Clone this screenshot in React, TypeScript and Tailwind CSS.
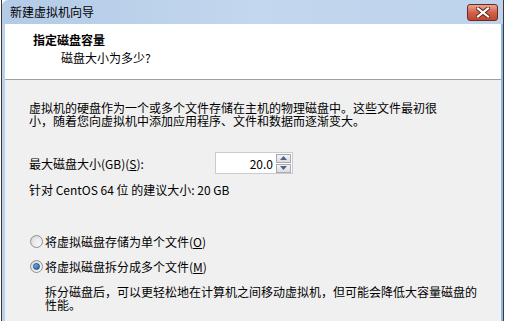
import React from 'react';

const font = { fontFamily: '"Noto Sans CJK SC", "Noto Sans", sans-serif' };

function CloseButton() {
  return (
    <div className="absolute right-[5px] top-[4px] flex h-[17px] w-[31px] items-center justify-center rounded-[3px] border border-[#6b2a20] bg-gradient-to-b from-[#e8a493] via-[#d3624a] to-[#c0452d]">
      <svg width="14" height="11" viewBox="0 0 14 11">
        <path d="M2 1.5 L12 9.5 M12 1.5 L2 9.5" stroke="#5a2018" strokeWidth="4" strokeLinecap="square" />
        <path d="M2 1.5 L12 9.5 M12 1.5 L2 9.5" stroke="#ffffff" strokeWidth="2.2" strokeLinecap="square" />
      </svg>
    </div>
  );
}

function SpinBox() {
  return (
    <div className="flex h-[22px] w-[78px] items-center border border-[#c7ccd4] bg-white">
      <div className="flex-1 pr-[3px] text-right text-[12px] leading-[13px] text-black">20.0</div>
      <div className="flex flex-col gap-[1px] pr-[1px]">
        <div className="flex h-[9px] w-[15px] items-center justify-center border border-[#a7abb0] bg-gradient-to-b from-[#f4f4f4] to-[#dcdcdc]">
          <svg width="7" height="4" viewBox="0 0 7 4"><path d="M0 4 L3.5 0 L7 4 Z" fill="#4d6185" /></svg>
        </div>
        <div className="flex h-[9px] w-[15px] items-center justify-center border border-[#a7abb0] bg-gradient-to-b from-[#f4f4f4] to-[#dcdcdc]">
          <svg width="7" height="4" viewBox="0 0 7 4"><path d="M0 0 L7 0 L3.5 4 Z" fill="#4d6185" /></svg>
        </div>
      </div>
    </div>
  );
}

function Radio({ checked }: { checked?: boolean }) {
  return (
    <div className="flex h-[13px] w-[13px] items-center justify-center rounded-full border border-[#8e8f8f] bg-gradient-to-br from-[#d4d4d4] to-[#fbfbfb]">
      {checked ? (
        <div className="h-[7px] w-[7px] rounded-full border border-[#1b4f8a] bg-gradient-to-br from-[#7fb8ee] to-[#1d5fa8]" />
      ) : (
        <div className="h-[7px] w-[7px] rounded-full bg-gradient-to-br from-[#e3e3e3] to-[#f8f8f8]" />
      )}
    </div>
  );
}

export default function App() {
  return (
    <div className="h-[321px] w-[505px] overflow-hidden bg-white pl-px pr-px text-black" style={font}>
      <div className="flex h-full flex-col border-l border-r border-[#3a3a3a]">
        <div className="relative flex h-[24px] shrink-0 items-center rounded-tl-[6px] bg-gradient-to-r from-[#b3cbe7] via-[#c3d7ee] to-[#bdd3ec] pl-[8px] text-[12px]">
          新建虚拟机向导
          <CloseButton />
        </div>
        <div className="flex flex-1 flex-col border-l-[3px] border-r-[2px] border-l-[#bcd2ea] border-r-[#8ab8e6]">
          <div className="h-[56px] shrink-0 border-b border-[#a0a0a0] bg-white pl-[28px] pt-[8px]">
            <div className="text-[12px] font-bold leading-[16px]">指定磁盘容量</div>
            <div className="mt-[2px] pl-[28px] text-[12px] leading-[16px]">磁盘大小为多少?</div>
          </div>
          <div className="flex-1 bg-[#f0f0f0] pl-[24px] pt-[21px] text-[12px] leading-[13px]">
            <p className="w-[420px]">
              虚拟机的硬盘作为一个或多个文件存储在主机的物理磁盘中。这些文件最初很小，随着您向虚拟机中添加应用程序、文件和数据而逐渐变大。
            </p>
            <div className="mt-[25px] flex items-center">
              <div className="w-[186px]">
                最大磁盘大小(GB)(<span className="underline">S</span>):
              </div>
              <SpinBox />
            </div>
            <div className="mt-[9px]">针对 CentOS 64 位 的建议大小: 20 GB</div>
            <div className="mt-[39px] flex items-center gap-[2px] pl-px">
              <Radio />
              <span>将虚拟磁盘存储为单个文件(<span className="underline">O</span>)</span>
            </div>
            <div className="mt-[12px] flex items-center gap-[2px] pl-px">
              <Radio checked />
              <span>将虚拟磁盘拆分成多个文件(<span className="underline">M</span>)</span>
            </div>
            <p className="mt-[12px] whitespace-nowrap pl-[16px]">
              拆分磁盘后，可以更轻松地在计算机之间移动虚拟机，但可能会降低大容量磁盘的
              <br />
              性能。
            </p>
          </div>
        </div>
      </div>
    </div>
  );
}
